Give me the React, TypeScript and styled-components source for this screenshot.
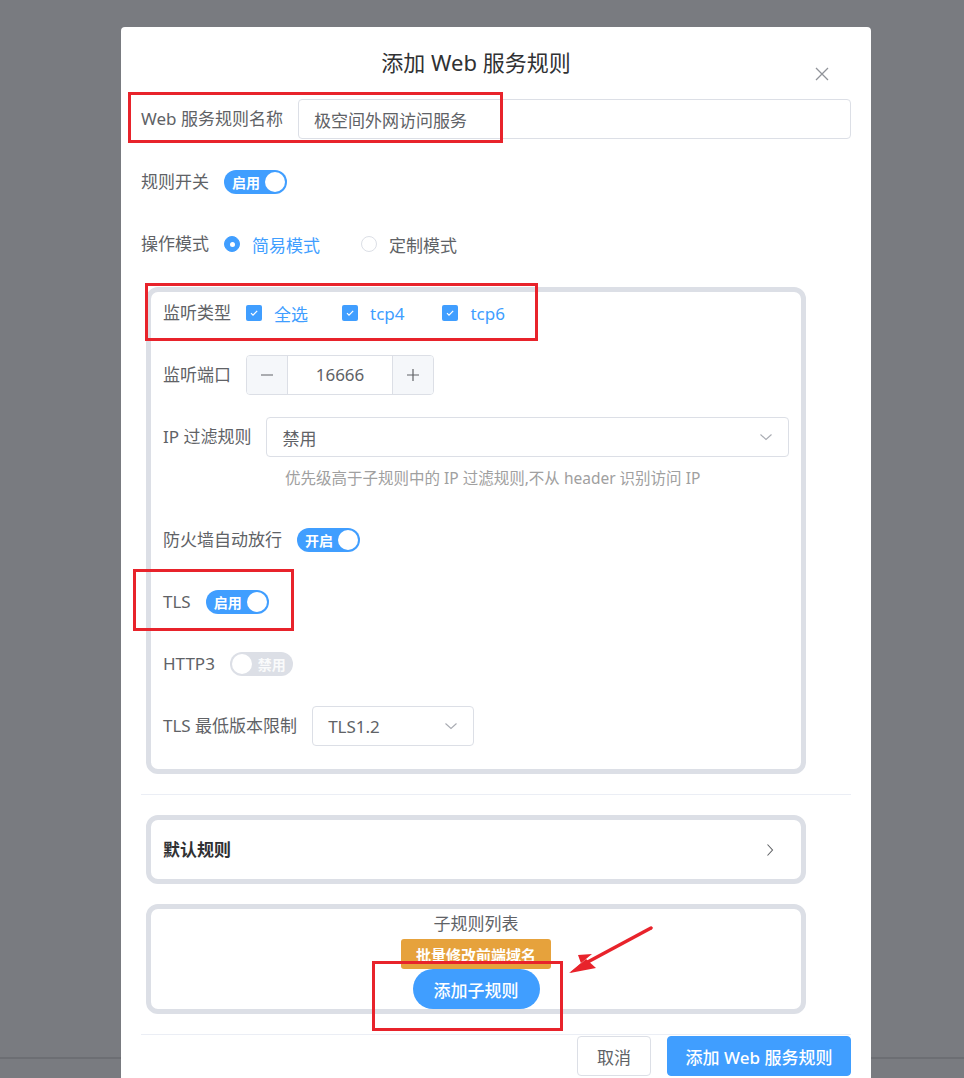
import React from "react";
import styled, { createGlobalStyle } from "styled-components";

const Colors = {
  primary: "#409eff",
  warning: "#e6a23c",
  text: "#606266",
  title: "#303133",
  hint: "#a0a0a0",
  border: "#dcdfe6",
  panel: "#dcdfe6",
  divider: "#ebeef5",
  fill: "#f5f7fa",
  mark: "#e8232b",
};

const GlobalStyle = createGlobalStyle`
  html, body {
    margin: 0;
    height: 1078px;
    overflow: hidden;
  }
  body {
    background: linear-gradient(
      to bottom,
      #797b80 0,
      #797b80 1057px,
      #6c6e73 1057px,
      #6c6e73 1059px,
      #797b80 1059px
    );
    font-family: "Noto Sans", "Noto Sans CJK SC", sans-serif;
    color: ${Colors.text};
  }
`;

const Modal = styled.div`
  position: relative;
  margin: 27px 0 0 121px;
  width: 750px;
  height: 1100px;
  background: #fff;
  border-radius: 4px 4px 0 0;
`;

const Header = styled.div`
  position: relative;
  height: 72px;
  display: flex;
  justify-content: center;
  padding: 20px 40px 0 0;
  box-sizing: border-box;
`;

const Title = styled.h2`
  margin: 0;
  font-size: 22px;
  font-weight: 400;
  line-height: 30px;
  color: ${Colors.title};
`;

const Close = styled.button`
  position: absolute;
  right: 40px;
  top: 38px;
  width: 18px;
  height: 18px;
  padding: 0;
  border: 0;
  background: none;
  display: flex;
`;

const Body = styled.div`
  padding: 0 20px;
`;

const Row = styled.div<{ $gap?: number }>`
  display: flex;
  align-items: center;
  min-height: 40px;
  margin-bottom: ${(p) => (p.$gap ?? 22)}px;
`;

const Label = styled.span<{ $bold?: boolean }>`
  font-size: 17px;
  line-height: 40px;
  padding-right: 15px;
  white-space: pre;
  color: ${(p) => (p.$bold ? Colors.title : Colors.text)};
  font-weight: ${(p) => (p.$bold ? 700 : 400)};
`;

const TextInput = styled.div<{ $width?: number }>`
  box-sizing: border-box;
  height: 40px;
  border: 1px solid ${Colors.border};
  border-radius: 4px;
  padding: 0 15px;
  display: flex;
  align-items: center;
  justify-content: space-between;
  font-size: 17px;
  color: ${Colors.text};
  ${(p) => (p.$width ? `width: ${p.$width}px;` : "flex: 1;")}
`;

const SwitchTrack = styled.div<{ $on: boolean }>`
  box-sizing: border-box;
  width: 63px;
  height: 24px;
  border-radius: 12px;
  padding: 2px;
  display: flex;
  align-items: center;
  flex-direction: ${(p) => (p.$on ? "row" : "row-reverse")};
  justify-content: space-between;
  background: ${(p) => (p.$on ? Colors.primary : Colors.panel)};
`;

const SwitchText = styled.span<{ $on: boolean }>`
  font-size: 14px;
  font-weight: 700;
  color: #fff;
  padding: ${(p) => (p.$on ? "0 0 0 6px" : "0 5px 0 0")};
  opacity: ${(p) => (p.$on ? 1 : 0.85)};
`;

const Knob = styled.span`
  width: 20px;
  height: 20px;
  border-radius: 50%;
  background: #fff;
`;

const Switch = ({ on, text }: { on: boolean; text: string }) => (
  <SwitchTrack $on={on}>
    <SwitchText $on={on}>{text}</SwitchText>
    <Knob />
  </SwitchTrack>
);

const Choice = styled.label<{ $active?: boolean; $space?: number }>`
  display: inline-flex;
  align-items: center;
  gap: 12px;
  margin-right: ${(p) => p.$space ?? 30}px;
  font-size: 17px;
  color: ${(p) => (p.$active ? Colors.primary : Colors.text)};
`;

const RadioDot = styled.span<{ $checked?: boolean }>`
  box-sizing: border-box;
  width: 16px;
  height: 16px;
  border-radius: 50%;
  border: 1px solid ${(p) => (p.$checked ? Colors.primary : Colors.border)};
  background: ${(p) => (p.$checked ? Colors.primary : "#fff")};
  display: flex;
  align-items: center;
  justify-content: center;
  &::after {
    content: "";
    width: 5px;
    height: 5px;
    border-radius: 50%;
    background: #fff;
    display: ${(p) => (p.$checked ? "block" : "none")};
  }
`;

const CheckBox = styled.span`
  width: 16px;
  height: 16px;
  border-radius: 2px;
  background: ${Colors.primary};
  display: flex;
  align-items: center;
  justify-content: center;
`;

const Check = () => (
  <CheckBox>
    <svg width="10" height="10" viewBox="0 0 10 10">
      <path d="M2 5.2l2 2L8.2 2.8" fill="none" stroke="#fff" strokeWidth="1.2" />
    </svg>
  </CheckBox>
);

const Panel = styled.div<{ $center?: boolean }>`
  border: 5px solid ${Colors.panel};
  border-radius: 12px;
  width: 660px;
  box-sizing: border-box;
  margin-left: 5px;
  ${(p) =>
    p.$center &&
    `display: flex; flex-direction: column; align-items: center;`}
`;

const Settings = styled(Panel)`
  padding: 1px 12px 1px;
`;

const Hint = styled.div`
  margin: -13px 0 30px 122px;
  font-size: 15.5px;
  line-height: 24px;
  white-space: pre;
  color: ${Colors.hint};
`;

const Stepper = styled.div`
  box-sizing: border-box;
  display: flex;
  width: 188px;
  height: 40px;
  border: 1px solid ${Colors.border};
  border-radius: 4px;
  overflow: hidden;
`;

const StepButton = styled.span<{ $side: "left" | "right" }>`
  width: 40px;
  background: ${Colors.fill};
  display: flex;
  align-items: center;
  justify-content: center;
  ${(p) => `border-${p.$side === "left" ? "right" : "left"}: 1px solid ${Colors.border};`}
`;

const StepValue = styled.span`
  flex: 1;
  text-align: center;
  line-height: 38px;
  font-size: 17px;
  color: ${Colors.text};
`;

const Divider = styled.div`
  height: 1px;
  background: ${Colors.divider};
  margin: 20px 0;
`;

const DefaultRule = styled(Panel)`
  height: 69px;
  display: flex;
  align-items: center;
  justify-content: space-between;
  padding: 0 24px 0 12px;
`;

const SubRules = styled(Panel)`
  margin-top: 20px;
  height: 110px;
`;

const ListTitle = styled.div`
  font-size: 17px;
  line-height: 30px;
  color: ${Colors.text};
`;

const BatchButton = styled.button`
  width: 150px;
  height: 30px;
  border: 0;
  border-radius: 3px;
  background: ${Colors.warning};
  color: #fff;
  font: 700 15px "Noto Sans", "Noto Sans CJK SC", sans-serif;
  padding: 0;
`;

const RoundButton = styled.button`
  width: 127px;
  height: 40px;
  border: 0;
  border-radius: 20px;
  background: ${Colors.primary};
  color: #fff;
  font: 500 17px "Noto Sans", "Noto Sans CJK SC", sans-serif;
  padding: 0;
`;

const Footer = styled.div`
  display: flex;
  justify-content: flex-end;
  gap: 16px;
  margin-top: -19px;
`;

const Button = styled.button<{ $primary?: boolean; $width: number }>`
  width: ${(p) => p.$width}px;
  height: 40px;
  padding: 0;
  border-radius: 4px;
  border: 1px solid ${(p) => (p.$primary ? Colors.primary : Colors.border)};
  background: ${(p) => (p.$primary ? Colors.primary : "#fff")};
  color: ${(p) => (p.$primary ? "#fff" : Colors.text)};
  white-space: pre;
  font: ${(p) => (p.$primary ? 500 : 400)} 17px "Noto Sans", "Noto Sans CJK SC", sans-serif;
`;

const Mark = styled.div<{ $x: number; $y: number; $w: number; $h: number }>`
  position: absolute;
  left: ${(p) => p.$x}px;
  top: ${(p) => p.$y}px;
  width: ${(p) => p.$w}px;
  height: ${(p) => p.$h}px;
  box-sizing: border-box;
  border: 3px solid ${Colors.mark};
  pointer-events: none;
`;

const Arrow = styled.svg`
  position: absolute;
  left: 445px;
  top: 898px;
  pointer-events: none;
`;

const Chevron = ({ dir = "down" }: { dir?: "down" | "right" }) => (
  <svg width="14" height="14" viewBox="0 0 14 14">
    <path
      d={dir === "down" ? "M1.5 4.5L7 9.5l5.5-5" : "M4.5 1.5L9.5 7l-5 5.5"}
      fill="none"
      stroke={dir === "down" ? "#a8abb2" : "#606266"}
      strokeWidth="1.1"
    />
  </svg>
);

export default function App() {
  return (
    <>
      <GlobalStyle />
      <Modal>
        <Header>
          <Title>添加 Web 服务规则</Title>
          <Close aria-label="关闭">
            <svg width="18" height="18" viewBox="0 0 18 18">
              <path d="M3 3l12 12M15 3L3 15" stroke="#909399" strokeWidth="1.3" />
            </svg>
          </Close>
        </Header>
        <Body>
          <Row $gap={23}>
            <Label>Web 服务规则名称</Label>
            <TextInput>极空间外网访问服务</TextInput>
          </Row>
          <Row>
            <Label>规则开关</Label>
            <Switch on text="启用" />
          </Row>
          <Row $gap={23}>
            <Label>操作模式</Label>
            <Choice $active $space={41}>
              <RadioDot $checked />
              简易模式
            </Choice>
            <Choice>
              <RadioDot />
              定制模式
            </Choice>
          </Row>

          <Settings>
            <Row>
              <Label>监听类型</Label>
              <Choice $active $space={34}>
                <Check />
                全选
              </Choice>
              <Choice $active $space={38}>
                <Check />
                tcp4
              </Choice>
              <Choice $active>
                <Check />
                tcp6
              </Choice>
            </Row>
            <Row>
              <Label>监听端口</Label>
              <Stepper>
                <StepButton $side="left">
                  <svg width="14" height="14" viewBox="0 0 14 14">
                    <path d="M1 7h12" stroke="#606266" strokeWidth="1.2" />
                  </svg>
                </StepButton>
                <StepValue>16666</StepValue>
                <StepButton $side="right">
                  <svg width="14" height="14" viewBox="0 0 14 14">
                    <path d="M1 7h12M7 1v12" stroke="#606266" strokeWidth="1.2" />
                  </svg>
                </StepButton>
              </Stepper>
            </Row>
            <Row>
              <Label>IP 过滤规则</Label>
              <TextInput>
                禁用
                <Chevron />
              </TextInput>
            </Row>
            <Hint>优先级高于子规则中的 IP 过滤规则,不从 header 识别访问 IP</Hint>
            <Row>
              <Label>防火墙自动放行</Label>
              <Switch on text="开启" />
            </Row>
            <Row>
              <Label>TLS</Label>
              <Switch on text="启用" />
            </Row>
            <Row>
              <Label>HTTP3</Label>
              <Switch on={false} text="禁用" />
            </Row>
            <Row>
              <Label>TLS 最低版本限制</Label>
              <TextInput $width={162}>
                TLS1.2
                <Chevron />
              </TextInput>
            </Row>
          </Settings>

          <Divider />

          <DefaultRule>
            <Label $bold>默认规则</Label>
            <Chevron dir="right" />
          </DefaultRule>

          <SubRules $center>
            <ListTitle>子规则列表</ListTitle>
            <BatchButton>批量修改前端域名</BatchButton>
            <RoundButton>添加子规则</RoundButton>
          </SubRules>

          <Divider />

          <Footer>
            <Button $width={74}>取消</Button>
            <Button $primary $width={184}>
              添加 Web 服务规则
            </Button>
          </Footer>
        </Body>

        <Mark $x={7} $y={65} $w={375} $h={51} />
        <Mark $x={24} $y={256} $w={393} $h={58} />
        <Mark $x={12} $y={542} $w={161} $h={62} />
        <Mark $x={251} $y={934} $w={191} $h={70} />
        <Arrow width="90" height="54" viewBox="0 0 90 54">
          <path d="M85 3L18 39" stroke={Colors.mark} strokeWidth="3.5" strokeLinecap="round" />
          <path d="M3 48L26 29L12 30L17 44Z" fill={Colors.mark} />
          <path d="M4 48L30 43L20 34Z" fill={Colors.mark} />
        </Arrow>
      </Modal>
    </>
  );
}
